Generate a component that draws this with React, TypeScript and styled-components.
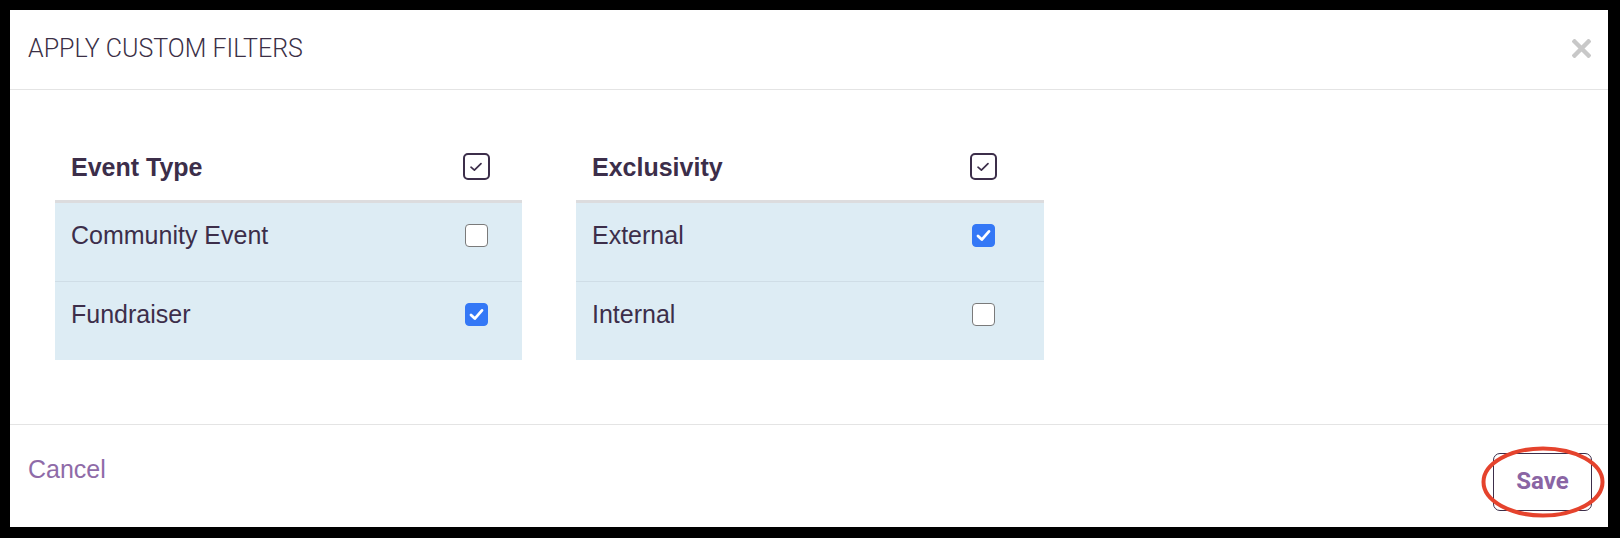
import React from "react";
import styled, { createGlobalStyle } from "styled-components";

const GlobalStyle = createGlobalStyle`
  html, body {
    margin: 0;
    padding: 0;
    background: #000;
  }
  * {
    box-sizing: border-box;
  }
`;

type FilterOption = {
  label: string;
  checked: boolean;
};

type FilterGroup = {
  title: string;
  width: number;
  checkCol: number;
  options: FilterOption[];
};

const groups: FilterGroup[] = [
  {
    title: "Event Type",
    width: 467,
    checkCol: 92,
    options: [
      { label: "Community Event", checked: false },
      { label: "Fundraiser", checked: true },
    ],
  },
  {
    title: "Exclusivity",
    width: 468,
    checkCol: 122,
    options: [
      { label: "External", checked: true },
      { label: "Internal", checked: false },
    ],
  },
];

const Page = styled.div`
  padding: 10px 12px 11px 10px;
`;

const Dialog = styled.div`
  width: 1598px;
  height: 517px;
  background: #fff;
  display: flex;
  flex-direction: column;
`;

const Header = styled.div`
  height: 80px;
  flex-shrink: 0;
  display: flex;
  align-items: center;
  justify-content: space-between;
  padding: 0 17px 2px 18px;
  border-bottom: 1px solid #e4e4e4;
`;

const Title = styled.h2`
  margin: 0;
  font-family: Roboto, "Liberation Sans", sans-serif;
  font-weight: 300;
  font-size: 25px;
  color: #3b3046;
`;

const CloseButton = styled.button`
  border: none;
  background: none;
  padding: 0;
  width: 19px;
  height: 19px;
  display: flex;
  cursor: pointer;
`;

const Body = styled.div`
  flex: 1;
  display: flex;
  align-items: flex-start;
  gap: 54px;
  padding: 40px 0 0 45px;
`;

const Table = styled.div<{ $width: number }>`
  width: ${(p) => p.$width}px;
  font-family: "Liberation Sans", Arial, sans-serif;
  color: #3c2e4a;
`;

const HeadRow = styled.div<{ $checkCol: number }>`
  height: 73px;
  display: grid;
  grid-template-columns: 1fr ${(p) => p.$checkCol}px;
  align-items: center;
  padding: 3px 0 0 16px;
  border-bottom: 3px solid #dcdcde;
`;

const HeadLabel = styled.span`
  font-size: 25px;
  font-weight: 700;
  line-height: 28px;
`;

const Row = styled.div<{ $checkCol: number }>`
  height: 78px;
  display: grid;
  grid-template-columns: 1fr ${(p) => p.$checkCol}px;
  align-items: start;
  padding: 18px 0 0 16px;
  background: #ddecf4;
  & + & {
    border-top: 1px solid #cfdde6;
    height: 79px;
  }
`;

const RowLabel = styled.span`
  font-size: 25px;
  line-height: 28px;
`;

const CheckCell = styled.div`
  display: flex;
  justify-content: center;
  align-items: center;
  height: 28px;
`;

const HeadBox = styled.span`
  width: 27px;
  height: 27px;
  border: 2px solid #3c2e4a;
  border-radius: 5px;
  background: #fff;
  display: flex;
  align-items: center;
  justify-content: center;
`;

const Box = styled.span<{ $checked: boolean }>`
  width: 23px;
  height: 23px;
  border-radius: 4px;
  display: flex;
  align-items: center;
  justify-content: center;
  background: ${(p) => (p.$checked ? "#3478f6" : "#fff")};
  border: 1px solid ${(p) => (p.$checked ? "#3478f6" : "#7a7a7a")};
`;

const Footer = styled.div`
  height: 103px;
  flex-shrink: 0;
  display: flex;
  justify-content: space-between;
  align-items: flex-start;
  padding: 28px 16px 0 18px;
  border-top: 1px solid #e4e4e4;
`;

const CancelLink = styled.a`
  margin-top: 2px;
  font-family: "Liberation Sans", Arial, sans-serif;
  font-size: 25px;
  line-height: 28px;
  color: #8f6ba8;
  text-decoration: none;
  cursor: pointer;
`;

const SaveWrap = styled.div`
  position: relative;
`;

const SaveButton = styled.button`
  width: 99px;
  height: 58px;
  padding: 0 0 3px;
  background: #fff;
  border: 1px solid #3c2e4a;
  border-radius: 7px;
  font-family: Roboto, "Liberation Sans", sans-serif;
  font-weight: 700;
  font-size: 24px;
  color: #8a65a4;
  cursor: pointer;
`;

const Annotation = styled.svg`
  position: absolute;
  left: -12px;
  top: -7px;
  width: 124px;
  height: 72px;
  pointer-events: none;
  overflow: visible;
`;

function HeadCheck() {
  return (
    <HeadBox>
      <svg width="16" height="14" viewBox="0 0 16 14">
        <path
          d="M3 7.2 L6.4 10.2 L13 3.6"
          fill="none"
          stroke="#3c2e4a"
          strokeWidth="1.7"
          strokeLinecap="round"
          strokeLinejoin="round"
        />
      </svg>
    </HeadBox>
  );
}

function RowCheck({ checked }: { checked: boolean }) {
  return (
    <Box $checked={checked}>
      {checked && (
        <svg width="15" height="13" viewBox="0 0 15 13">
          <path
            d="M2 7 L5.8 10.6 L13 2.4"
            fill="none"
            stroke="#fff"
            strokeWidth="2.8"
            strokeLinecap="round"
            strokeLinejoin="round"
          />
        </svg>
      )}
    </Box>
  );
}

function FilterTable({ group }: { group: FilterGroup }) {
  return (
    <Table $width={group.width}>
      <HeadRow $checkCol={group.checkCol}>
        <HeadLabel>{group.title}</HeadLabel>
        <CheckCell>
          <HeadCheck />
        </CheckCell>
      </HeadRow>
      {group.options.map((opt) => (
        <Row key={opt.label} $checkCol={group.checkCol}>
          <RowLabel>{opt.label}</RowLabel>
          <CheckCell>
            <RowCheck checked={opt.checked} />
          </CheckCell>
        </Row>
      ))}
    </Table>
  );
}

export default function App() {
  return (
    <Page>
      <GlobalStyle />
      <Dialog>
        <Header>
          <Title>APPLY CUSTOM FILTERS</Title>
          <CloseButton aria-label="Close">
            <svg width="19" height="19" viewBox="0 0 19 19">
              <path
                d="M2.5 2.5 L16.5 16.5 M16.5 2.5 L2.5 16.5"
                stroke="#c8c8c8"
                strokeWidth="4.4"
                strokeLinecap="square"
              />
            </svg>
          </CloseButton>
        </Header>
        <Body>
          {groups.map((g) => (
            <FilterTable key={g.title} group={g} />
          ))}
        </Body>
        <Footer>
          <CancelLink>Cancel</CancelLink>
          <SaveWrap>
            <SaveButton>Save</SaveButton>
            <Annotation viewBox="0 0 124 72">
              <ellipse
                cx="62"
                cy="36"
                rx="59.5"
                ry="33.5"
                fill="none"
                stroke="#e5432d"
                strokeWidth="4"
              />
            </Annotation>
          </SaveWrap>
        </Footer>
      </Dialog>
    </Page>
  );
}
